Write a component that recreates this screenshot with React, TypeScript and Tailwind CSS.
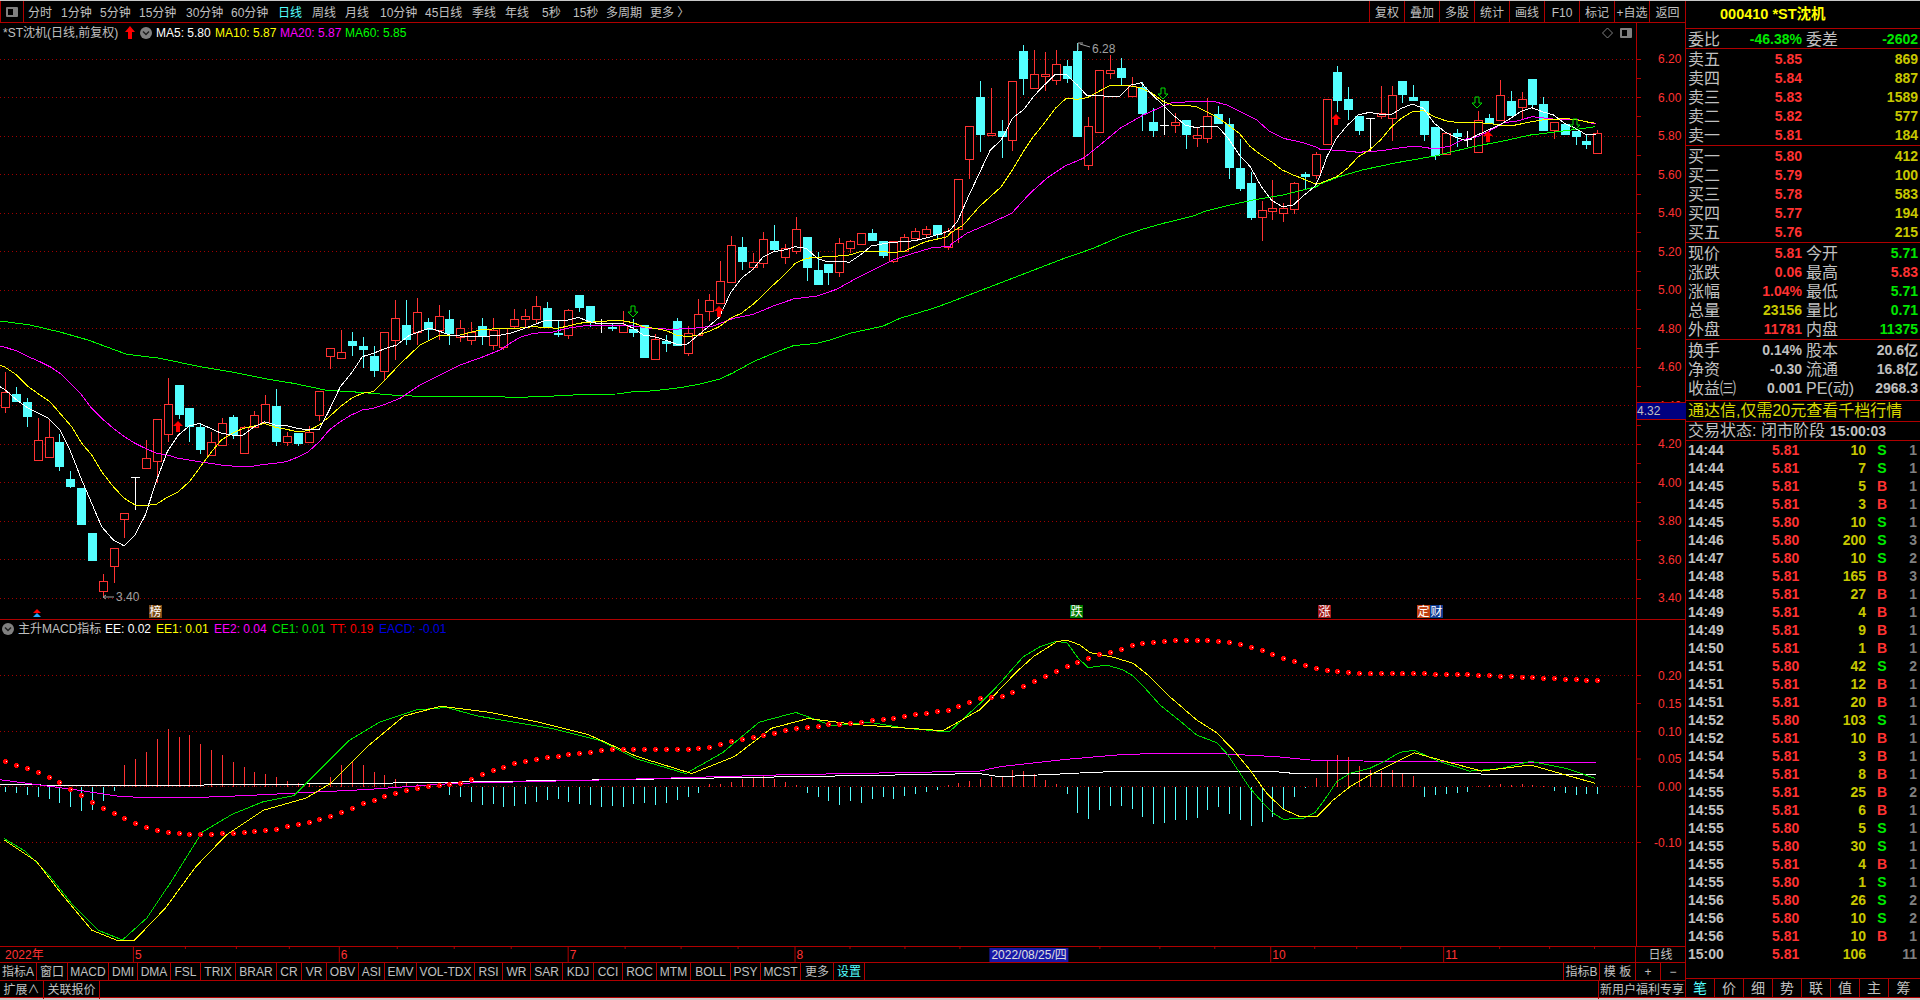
import React from 'react'

type Pt = [number, number]
type Candle = [string, number, number, number?, number?]

const RED = '#ff3232'
const CYAN = '#54ffff'
const GRID = '#a00000'

const candleX = (i: number) => Math.round(5.3 + 10.83 * i)

// zoomed coordinates -> page coordinates
const toPage = (ox: number, oy: number, sx: number, pts: number[][]): Pt[] =>
  pts.map(([x, y]) => [ox + x / sx, oy + y / 3] as Pt)
const fromSmall = (pts: number[][]): Pt[] => pts.map(([x, y]) => [x * 1.2245, y * 1.224] as Pt)
const ZOOM2 = 2.613
const scaleC = (oy: number, list: Candle[]): Candle[] =>
  list.map(([k, t, b, wt, wb]) => [k, oy + t / 3, oy + b / 3, oy + (wt ?? t) / 3, oy + (wb ?? b) / 3])

const candles: Candle[] = [
  ...scaleC(340, [
    ['r', 157, 200, 97, 220], ['c', 162, 186, 141], ['c', 186, 231, 174, 260], ['r', 301, 361, 234], ['r', 292, 350, 236],
    ['c', 306, 380, 282, 392], ['c', 418, 441, 393, 443], ['c', 444, 554], ['c', 579, 662], ['r', 724, 752, 702, 770],
    ['r', 625, 677, 625, 728], ['r', 520, 538, 520, 594], ['w', 412, 412, 412, 509], ['r', 355, 383, 300, 386], ['r', 238, 362, 238, 428],
    ['r', 193, 281, 114, 305], ['c', 135, 224, 135, 236], ['c', 205, 261, 205, 305], ['c', 261, 329, 252, 341], ['r', 307, 344, 276],
    ['r', 250, 314, 235], ['c', 231, 285, 225, 296], ['r', 262, 338, 258], ['r', 226, 262, 213], ['r', 193, 245, 165],
    ['c', 198, 305, 147, 318], ['r', 287, 307, 277, 318], ['c', 279, 311, 279, 318], ['r', 275, 307, 258], ['r', 153, 226, 153, 243],
    ['r', 25, 49, 25, 87], ['r', 37, 55, -30], ['c', 3, 17, -25, 47], ['c', 18, 29, -10, 85], ['c', 48, 93, 18, 110],
    ['r', -25, 94, -25, 120],
  ]),
  ['r', 318, 340, 300, 360], ['c', 325, 340, 300, 345], ['r', 312, 332, 298, 345], ['c', 322, 330, 318, 340], ['r', 316, 330, 305, 340],
  ['c', 319, 334, 310, 345], ['r', 328, 337, 320, 342], ['r', 332, 340, 322, 345], ['c', 326, 336, 318, 345], ['r', 330, 345, 318, 350],
  ...scaleC(200, [
    ['r', 385, 440, 385, 450], ['r', 358, 377, 327, 385], ['r', 349, 358, 327, 380], ['r', 319, 356, 289, 369], ['c', 324, 381, 306],
    ['c', 400, 404, 364, 410], ['r', 331, 406, 327, 417], ['c', 285, 323, 285, 336], ['c', 318, 368, 318, 381], ['w', 375, 375, 358, 399],
    ['c', 381, 387, 369, 393], ['r', 376, 395, 334], ['c', 387, 399, 358, 411], ['c', 375, 473], ['r', 418, 476, 403, 479],
    ['c', 423, 431, 405, 456], ['c', 363, 437, 354], ['r', 400, 458, 379, 468], ['r', 343, 406, 297], ['r', 301, 332, 282, 363],
    ['r', 244, 308, 183], ['r', 136, 245, 109, 248], ['c', 141, 186, 111, 210], ['r', 187, 200, 159, 210], ['r', 118, 188, 97, 204],
    ['c', 124, 150, 75, 155], ['r', 145, 170, 132, 192], ['r', 88, 152, 52, 161], ['c', 111, 203, 111, 243], ['c', 210, 255, 157],
    ['c', 192, 219, 192, 255], ['r', 130, 215, 114, 231], ['r', 124, 143, 120, 160], ['r', 100, 131], ['c', 99, 123, 87],
    ['c', 124, 168, 124, 174], ['r', 124, 182, 124, 188], ['r', 112, 153, 102], ['r', 94, 113, 84], ['r', 88, 101, 78, 115],
    ['c', 75, 105, 75, 118], ['r', 94, 140, 84, 150],
  ]),
  ...scaleC(30, [
    ['r', 448, 598, 448, 640], ['r', 289, 386, 289, 447], ['c', 201, 315, 153, 366], ['r', 310, 316, 174], ['c', 303, 320, 270, 384],
    ['r', 154, 329, 154, 363], ['c', 63, 147, 45, 195], ['r', 133, 173, 60], ['r', 133, 139, 66, 183], ['r', 103, 149, 60, 165],
    ['c', 108, 147, 90, 159], ['c', 63, 321, 40], ['r', 289, 404, 262, 420], ['r', 121, 305], ['r', 121, 129, 75, 147],
    ['c', 114, 144, 84, 168], ['r', 168, 198, 141, 200], ['c', 171, 252, 156, 303], ['c', 276, 303, 234, 321], ['w', 284, 284, 210, 315],
    ['r', 276, 284, 250, 309], ['c', 270, 315, 270, 357], ['r', 316, 323, 291, 351], ['r', 259, 323, 204, 339], ['c', 252, 282, 228],
    ['c', 282, 414, 264, 447], ['c', 414, 477, 327, 483], ['c', 459, 564, 426, 570], ['r', 541, 560, 513, 633], ['r', 534, 542, 450, 570],
    ['r', 534, 548, 519, 576], ['r', 459, 537, 456, 552], ['c', 432, 441, 426, 477], ['r', 372, 435, 366, 447], ['r', 207, 342],
  ]),
  ...scaleC(0, [
    ['c', 217, 303, 198, 335], ['c', 298, 330, 262, 360], ['c', 349, 393, 349, 405], ['w', 355, 355, 355, 455], ['r', 338, 349, 258, 358],
    ['r', 286, 355, 258, 422], ['c', 243, 285, 243, 310], ['c', 292, 303, 255], ['c', 303, 405, 303, 422], ['c', 381, 468, 381, 480],
    ['r', 400, 463], ['c', 400, 411, 388, 440], ['w', 418, 418, 393, 441], ['r', 361, 455, 333], ['c', 354, 371, 342],
    ['r', 286, 361, 240], ['c', 303, 349, 272], ['r', 298, 320, 275, 360], ['c', 237, 315, 237, 320], ['c', 312, 393, 292],
    ['r', 367, 389, 367, 416], ['c', 372, 405], ['c', 393, 411, 393, 434], ['c', 423, 434, 405, 446], ['r', 400, 458, 390],
  ]),
]

const ma5: Pt[] = [
  ...toPage(0, 340, 3, [[0, 140], [16, 150], [50, 180], [85, 205], [145, 235], [180, 270], [210, 330], [245, 420], [275, 490], [305, 560], [340, 600], [373, 618], [405, 585], [436, 525], [470, 420], [502, 335], [535, 285], [568, 258], [598, 250], [631, 265], [664, 280], [697, 285], [730, 285], [763, 260], [793, 245], [826, 255], [859, 257], [892, 265], [925, 270], [958, 268], [988, 210], [1021, 140], [1054, 100], [1087, 50], [1120, 40], [1150, 28], [1190, 15]]),
  [410, 335], [430, 328], [450, 335], [470, 337], [490, 336],
  ...toPage(500, 200, 3, [[0, 406], [30, 400], [60, 390], [100, 375], [139, 360], [172, 363], [205, 360], [235, 352], [268, 365], [301, 372], [334, 370], [367, 370], [400, 385], [430, 405], [463, 410], [496, 420], [529, 432], [562, 432], [595, 405], [625, 380], [658, 352], [691, 280], [724, 235], [757, 210], [790, 170], [820, 155], [853, 150], [886, 140], [919, 145], [952, 175], [982, 185], [1015, 183], [1048, 187], [1081, 165], [1114, 138], [1147, 132], [1177, 127], [1210, 125], [1243, 122], [1276, 115], [1309, 105], [1342, 95]]),
  ...toPage(950, 30, 3, [[0, 600], [22, 575], [55, 500], [88, 430], [121, 360], [154, 330], [187, 265], [220, 240], [250, 200], [283, 165], [316, 133], [349, 133], [382, 165], [412, 198], [445, 197], [478, 199], [511, 198], [544, 165], [574, 158], [607, 195], [640, 225], [673, 258], [706, 285], [739, 293], [769, 288], [802, 288], [835, 325], [868, 375], [901, 410], [934, 470], [964, 510], [997, 530], [1030, 525], [1063, 495], [1096, 468]]),
  ...toPage(1320, 0, ZOOM2, [[0, 528], [18, 470], [43, 415], [72, 375], [100, 345], [129, 337], [158, 343], [187, 343], [213, 325], [241, 312], [270, 325], [299, 370], [328, 397], [354, 412], [383, 422], [411, 405], [440, 390], [469, 375], [498, 355], [524, 335], [553, 323], [581, 335], [610, 345], [639, 370], [667, 385], [694, 403], [720, 403]]),
]

const ma10: Pt[] = [
  ...toPage(0, 340, 3, [[0, 75], [16, 82], [50, 105], [85, 140], [120, 165], [150, 185], [180, 220], [215, 260], [245, 310], [275, 345], [305, 395], [340, 440], [373, 475], [405, 495], [436, 497], [470, 492], [502, 472], [535, 455], [568, 425], [598, 385], [631, 340], [664, 300], [697, 280], [730, 265], [763, 258], [793, 250], [826, 262], [859, 268], [892, 275], [925, 272], [958, 255], [988, 230], [1021, 200], [1054, 175], [1087, 160], [1120, 155], [1150, 125], [1200, 72]]),
  [420, 345], [440, 335], [460, 335], [480, 330],
  ...toPage(500, 200, 3, [[0, 385], [50, 385], [100, 380], [172, 385], [205, 378], [235, 370], [268, 367], [334, 362], [367, 362], [400, 368], [430, 380], [463, 385], [500, 392], [529, 405], [562, 410], [595, 405], [625, 395], [658, 380], [691, 355], [724, 340], [757, 315], [790, 285], [820, 255], [853, 225], [886, 190], [919, 175], [952, 172], [982, 170], [1015, 168], [1048, 165], [1081, 155], [1114, 155], [1147, 155], [1177, 157], [1210, 155], [1243, 140], [1276, 125], [1309, 118], [1342, 110]]),
  ...toPage(950, 30, 3, [[0, 610], [40, 585], [88, 530], [154, 470], [187, 420], [220, 365], [250, 320], [283, 280], [316, 235], [349, 205], [382, 208], [412, 203], [445, 185], [478, 167], [511, 166], [544, 168], [574, 175], [607, 190], [640, 215], [673, 227], [706, 226], [739, 230], [769, 245], [802, 262], [835, 285], [868, 310], [901, 350], [934, 375], [964, 395], [997, 420], [1030, 435], [1063, 448], [1096, 462]]),
  ...toPage(1320, 0, ZOOM2, [[0, 550], [43, 530], [72, 505], [100, 470], [129, 450], [158, 420], [187, 380], [213, 355], [241, 335], [270, 332], [299, 350], [328, 362], [354, 367], [383, 367], [411, 368], [440, 370], [469, 375], [498, 378], [524, 372], [553, 365], [581, 360], [610, 358], [639, 356], [667, 358], [694, 365], [720, 370]]),
]

const ma20: Pt[] = [
  ...toPage(0, 340, 3, [[0, 18], [16, 22], [50, 33], [85, 50], [120, 65], [150, 80], [180, 100], [215, 135], [245, 165], [275, 205], [305, 235], [340, 265], [373, 290], [405, 310], [436, 325], [470, 340], [502, 345], [535, 355], [568, 360], [598, 365], [631, 370], [664, 375], [697, 378], [730, 381], [763, 378], [793, 373], [826, 370], [859, 365], [892, 352], [925, 335], [958, 305], [988, 270], [1021, 245], [1054, 225], [1087, 210], [1120, 205], [1150, 195], [1200, 175]]),
  [420, 385], [440, 375], [460, 365], [480, 358],
  ...toPage(500, 200, 3, [[0, 450], [30, 430], [60, 412], [100, 400], [160, 396], [200, 385], [250, 378], [300, 375], [370, 375], [400, 378], [450, 385], [520, 388], [580, 385], [640, 378], [700, 355], [760, 343], [820, 318], [880, 297], [950, 288], [1010, 268], [1060, 240], [1120, 210], [1180, 180], [1240, 160], [1300, 142], [1350, 140]]),
  ...toPage(950, 30, 3, [[0, 645], [50, 610], [120, 580], [185, 550], [240, 490], [290, 445], [345, 408], [400, 385], [450, 345], [510, 295], [580, 255], [640, 228], [670, 217], [790, 214], [830, 225], [880, 250], [920, 270], [960, 305], [1000, 325], [1060, 338], [1100, 352]]),
  ...toPage(1320, 0, ZOOM2, [[0, 448], [30, 450], [60, 452], [100, 457], [160, 452], [200, 445], [250, 438], [300, 447], [340, 438], [370, 420], [411, 410], [440, 395], [480, 368], [520, 362], [553, 350], [610, 357], [670, 358], [720, 372]]),
]

const ma60: Pt[] = [
  [0, 321], [30, 325], [60, 332], [88, 340],
  ...toPage(0, 340, 3, [[380, 43], [480, 55], [600, 80], [700, 97], [800, 117], [880, 130], [975, 150], [1080, 157], [1200, 167]]),
  [450, 397],
  ...toPage(500, 200, 3, [[0, 590], [50, 593], [100, 590], [190, 587], [250, 583], [350, 582], [400, 575], [450, 573], [500, 568], [540, 563], [600, 552], [660, 537], [700, 518], [760, 485], [820, 460], [880, 437], [950, 430], [990, 420], [1050, 400], [1150, 378], [1200, 355], [1300, 325], [1350, 307]]),
  ...toPage(950, 30, 3, [[335, 688], [430, 655], [510, 620], [570, 600], [640, 580], [730, 558], [770, 542], [850, 523], [910, 510], [1000, 495], [1100, 470]]),
  ...toPage(1320, 0, ZOOM2, [[0, 552], [50, 530], [110, 510], [200, 488], [300, 468], [400, 440], [470, 425], [550, 405], [620, 395], [670, 388], [720, 380]]),
]

// MACD pane
const macdGreen: Pt[] = [
  ...fromSmall([[3, 685], [20, 695], [40, 715], [60, 740], [80, 760], [100, 768], [120, 750], [140, 720], [165, 680], [190, 665], [215, 655], [240, 650], [265, 625], [285, 605], [310, 590], [340, 580], [365, 578], [390, 585], [420, 590], [450, 595], [490, 605], [520, 620], [560, 632], [590, 615], [620, 590], [650, 582], [680, 593], [710, 590], [740, 595], [775, 598], [800, 575]]),
  ...toPage(1000, 620, 3, [[0, 190], [30, 155], [70, 110], [120, 80], [165, 65], [200, 67], [235, 115], [265, 143], [320, 135], [370, 150], [400, 168], [440, 210], [480, 255], [530, 295], [590, 345], [650, 368], [680, 400], [720, 460], [750, 505], [790, 550], [820, 580], [850, 598], [910, 595], [945, 578], [980, 530], [1010, 485], [1050, 460], [1110, 445], [1160, 420], [1200, 397]]),
  ...fromSmall([[1155, 613], [1175, 622], [1200, 630], [1225, 628], [1250, 622], [1280, 628], [1303, 636]]),
]
const macdYellow: Pt[] = [
  ...fromSmall([[3, 686], [30, 704], [50, 730], [75, 760], [95, 768], [110, 768], [135, 742], [160, 708], [185, 682], [215, 662], [250, 652], [270, 640], [300, 610], [330, 585], [360, 577], [400, 582], [440, 590], [480, 600], [520, 618], [565, 632], [600, 618], [630, 595], [660, 587], [700, 592], [770, 597], [800, 580]]),
  ...toPage(1000, 620, 3, [[0, 208], [50, 155], [100, 110], [170, 65], [200, 60], [240, 75], [270, 98], [340, 112], [400, 130], [450, 170], [500, 222], [590, 300], [650, 338], [700, 390], [750, 450], [800, 520], [850, 568], [900, 590], [950, 590], [1000, 540], [1050, 500], [1110, 465], [1200, 420]]),
  ...fromSmall([[1155, 615], [1180, 622], [1210, 630], [1250, 625], [1303, 640]]),
]
const macdMagenta: Pt[] = [
  ...fromSmall([[0, 637], [60, 645], [100, 651], [150, 652], [200, 650], [300, 645], [370, 640], [500, 637], [640, 633], [800, 630]]),
  ...toPage(1000, 620, 3, [[0, 440], [200, 418], [350, 405], [470, 400], [640, 400], [830, 410], [930, 420], [1200, 425]]),
  [1596, 763],
]
const macdWhite: Pt[] = [
  ...fromSmall([[0, 641], [100, 642], [300, 640], [500, 637], [800, 632]]),
  ...toPage(1000, 620, 3, [[0, 470], [180, 462], [280, 457], [380, 454], [770, 454], [865, 457], [870, 460], [1200, 460]]),
  [1596, 775],
]
const dotPath: Pt[] = [
  ...fromSmall([[5, 622], [20, 627], [35, 632], [50, 640], [75, 655], [100, 668], [125, 678], [150, 681], [175, 681], [200, 680], [225, 677], [250, 672], [275, 665], [300, 655], [325, 647], [350, 642], [375, 640], [400, 630], [425, 622], [450, 618], [475, 615], [500, 612], [525, 612], [560, 612], [580, 610], [600, 605], [625, 600], [650, 595], [675, 592], [700, 590], [725, 587], [750, 583], [775, 580], [800, 570]]),
  ...toPage(1000, 620, 3, [[5, 228], [35, 215], [66, 200], [99, 185], [132, 170], [165, 155], [198, 140], [231, 125], [261, 116], [294, 104], [327, 96], [360, 87], [393, 77], [423, 68], [456, 65], [489, 63], [522, 61], [555, 61], [588, 61], [618, 61], [651, 63], [684, 66], [717, 72], [750, 81], [783, 89], [813, 101], [846, 113], [879, 122], [912, 134], [945, 143], [978, 150], [1008, 152], [1041, 155], [1074, 158], [1107, 158], [1140, 158], [1173, 158]]),
  ...fromSmall([[1200, 551], [1250, 553], [1305, 556]]),
]

const lerpY = (pts: Pt[], x: number) => {
  for (let i = 1; i < pts.length; i++) {
    if (x <= pts[i][0]) {
      const [x0, y0] = pts[i - 1]
      const [x1, y1] = pts[i]
      return y0 + ((y1 - y0) * (x - x0)) / (x1 - x0 || 1)
    }
  }
  return pts[pts.length - 1][1]
}

const histogram = [
  -5, -6, -8, -10, -12, -16, -20, -24, -23, -14, -4, 22, 28, 35, 48, 58, 50, 52, 43, 37, 32, 25, 20, 15, 13, 10, 6, 4, 3, 1,
  10, 22, 25, 22, 15, 12, 8, 5, 3, 2, 1, -8, -10, -15, -18, -17, -20, -19, -17, -15, -13, -12, -15, -17, -18, -20, -19, -20, -17, -16,
  -18, -16, -13, -10, -6, 3, 3, 5, 8, 10, 12, 8, 5, 2, -6, -10, -14, -18, -14, -16, -12, -10, -12, -9, -7, -5, -3, 2, 4, 6, 8, 10,
  11, 17, 16, 13, 7, 3, -7, -26, -32, -23, -19, -19, -22, -30, -37, -36, -33, -33, -31, -23, -20, -27, -33, -39, -35, -30, -23, -10, -1,
  9, 27, 32, 30, 21, 17, 16, 17, 14, 11, -10, -8, -7, -6, -5, 1, 2, 3, 2, 3, 2, 1, -4, -6, -8, -7, -7,
]

const prices = [6.2, 6.0, 5.8, 5.6, 5.4, 5.2, 5.0, 4.8, 4.6, 4.4, 4.2, 4.0, 3.8, 3.6, 3.4]
const priceY = (p: number) => 58.7 + (6.2 - p) * 192.6

const line = (pts: Pt[]) => pts.map(([x, y]) => `${x.toFixed(1)},${y.toFixed(1)}`).join(' ')

function UpArrow({ x, y }: { x: number; y: number }) {
  return (
    <polygon
      fill="#ff0000"
      points={`${x},${y} ${x + 5},${y + 5} ${x + 2},${y + 5} ${x + 2},${y + 11} ${x - 2},${y + 11} ${x - 2},${y + 5} ${x - 5},${y + 5}`}
    />
  )
}

function DownArrow({ x, y }: { x: number; y: number }) {
  return (
    <polygon
      fill="none"
      stroke="#00e000"
      points={`${x - 2},${y} ${x + 2},${y} ${x + 2},${y + 6} ${x + 5},${y + 6} ${x},${y + 11} ${x - 5},${y + 6} ${x - 2},${y + 6}`}
    />
  )
}

function Tag({ x, text, bg }: { x: number; text: string; bg: string }) {
  return (
    <g>
      <rect x={x} y={605} width={13} height={13} fill={bg} />
      <text x={x + 0.5} y={616} className="text-[12px] fill-white">
        {text}
      </text>
    </g>
  )
}

function PriceChart() {
  return (
    <svg viewBox="0 23 1686 596" className="block w-[1686px] h-[596px]">
      {prices.map((p) => (
        <line key={p} x1={0} x2={1636} y1={Math.round(priceY(p)) + 0.5} y2={Math.round(priceY(p)) + 0.5} stroke={GRID} strokeDasharray="1 3" />
      ))}
      <g shapeRendering="crispEdges">
        {candles.map(([k, t, b, wt, wb], i) => {
          const x = candleX(i)
          const top = Math.round(t)
          const bot = Math.round(b)
          const color = k === 'r' ? RED : k === 'c' ? CYAN : '#ffffff'
          return (
            <g key={i}>
              <line x1={x + 0.5} x2={x + 0.5} y1={Math.round(wt ?? t)} y2={top} stroke={color} />
              <line x1={x + 0.5} x2={x + 0.5} y1={bot} y2={Math.round(wb ?? b)} stroke={color} />
              {k === 'r' && <rect x={x - 4 + 0.5} y={top + 0.5} width={8} height={bot - top} fill="#000" stroke={RED} />}
              {k === 'c' && <rect x={x - 4} y={top} width={9} height={bot - top} fill={CYAN} />}
              {k === 'w' && <line x1={x - 4} x2={x + 5} y1={top + 0.5} y2={top + 0.5} stroke="#fff" />}
            </g>
          )
        })}
        <polyline points={line(ma60)} fill="none" stroke="#00ff00" />
        <polyline points={line(ma20)} fill="none" stroke="#ff00ff" />
        <polyline points={line(ma10)} fill="none" stroke="#ffff00" />
        <polyline points={line(ma5)} fill="none" stroke="#ffffff" />
      </g>
      <UpArrow x={178} y={421} />
      <UpArrow x={719} y={306} />
      <UpArrow x={1336} y={114} />
      <UpArrow x={1488} y={131} />
      <DownArrow x={633} y={306} />
      <DownArrow x={1163} y={88} />
      <DownArrow x={1477} y={97} />
      <DownArrow x={1575} y={119} />

      {/* high / low notes */}
      <path d="M103 597 L114 597 M103 597 L106 595 M103 597 L106 599" stroke="#a0a0a0" fill="none" />
      <text x={116} y={601} className="text-[12px] fill-[#a0a0a0]">3.40</text>
      <path d="M1078 43 L1078 50 M1078 43 L1083 43 M1080 44 L1090 47" stroke="#a0a0a0" fill="none" />
      <text x={1092} y={53} className="text-[12px] fill-[#a0a0a0]">6.28</text>

      {/* signals along the bottom */}
      <polygon points="37,609 41,613 33,613" fill="#ff0000" />
      <polygon points="37,613 41,617 33,617" fill="#22aaff" />
      <Tag x={149} text="榜" bg="#7a4a14" />
      <Tag x={1070} text="跌" bg="#007a00" />
      <Tag x={1318} text="涨" bg="#a01818" />
      <Tag x={1417} text="定" bg="#c04010" />
      <Tag x={1430} text="财" bg="#103a90" />

      {/* price axis */}
      <line x1={1636.5} x2={1636.5} y1={23} y2={619} stroke="#b00000" />
      {Array.from({ length: 29 }, (_, i) => (
        <line key={i} x1={1636} x2={1641} y1={Math.round(priceY(6.2 - i * 0.1)) + 0.5} y2={Math.round(priceY(6.2 - i * 0.1)) + 0.5} stroke="#b00000" />
      ))}
      {prices.map((p) => (
        <text key={p} x={1658} y={priceY(p) + 4.5} className="text-[12px] fill-[#ff3232]">
          {p.toFixed(2)}
        </text>
      ))}
      <rect x={1637} y={403} width={49} height={16} fill="#000080" />
      <line x1={1636} x2={1686} y1={402.5} y2={402.5} stroke="#b00000" />
      <line x1={1636} x2={1686} y1={419.5} y2={419.5} stroke="#b00000" />
      <text x={1637} y={415} className="text-[12px] fill-[#c0c0c0]">4.32</text>

      {/* corner buttons */}
      <path d="M1607.5 28 L1612.5 33 L1607.5 38 L1602.5 33 Z" fill="none" stroke="#808080" />
      <rect x={1620} y={28} width={12} height={10} rx={1} fill="#808080" />
      <rect x={1622} y={30} width={5} height={6} fill="#000" />
    </svg>
  )
}

function MacdChart() {
  return (
    <svg viewBox="0 620 1686 326" className="block w-[1686px] h-[326px]">
      {[675.5, 731.5, 786.5, 842.5].map((y) => (
        <line key={y} x1={0} x2={1636} y1={y} y2={y} stroke={GRID} strokeDasharray="1 3" />
      ))}
      <g shapeRendering="crispEdges">
        {histogram.map((h, i) => (
          <line key={i} x1={candleX(i) + 0.5} x2={candleX(i) + 0.5} y1={787} y2={787 - h} stroke={h > 0 ? RED : CYAN} />
        ))}
        <polyline points={line(macdWhite)} fill="none" stroke="#ffffff" />
        <polyline points={line(macdMagenta)} fill="none" stroke="#ff00ff" />
        <polyline points={line(macdGreen)} fill="none" stroke="#00e000" />
        <polyline points={line(macdYellow)} fill="none" stroke="#ffff00" />
      </g>
      {histogram.map((_, i) => {
        const x = candleX(i)
        const y = Math.round(lerpY(dotPath, x))
        return (
          <g key={i} shapeRendering="crispEdges">
            <rect x={x - 1} y={y - 2} width={3} height={5} fill="#ff0000" />
            <rect x={x - 2} y={y - 1} width={5} height={3} fill="#ff0000" />
            <rect x={x + 1} y={y} width={1} height={1} fill="#ffffff" />
          </g>
        )
      })}
      <line x1={1636.5} x2={1636.5} y1={620} y2={946} stroke="#c00000" strokeWidth={1} />
      {[
        ['0.20', 675.5],
        ['0.15', 703.5],
        ['0.10', 731.5],
        ['0.05', 759],
        ['0.00', 786.5],
        ['-0.10', 842.5],
      ].map(([t, y]) => (
        <g key={t as string}>
          <line x1={1636} x2={1641} y1={y as number} y2={y as number} stroke="#b00000" />
          <text x={t === '-0.10' ? 1654 : 1658} y={(y as number) + 4} className="text-[12px] fill-[#ff3232]">
            {t}
          </text>
        </g>
      ))}
    </svg>
  )
}

function DateAxis() {
  const months: [number, string][] = [[133, '5'], [339, '6'], [568, '7'], [795, '8'], [1271, '10'], [1444, '11']]
  const small = [185, 236, 289, 397, 454, 511, 625, 681, 738, 850, 905, 960, 1100, 1160, 1215, 1315, 1357, 1401, 1500, 1550, 1595]
  return (
    <svg viewBox="0 0 1636 15" className="block w-[1636px] h-[15px]">
      {small.map((x) => (
        <line key={x} x1={x + 0.5} x2={x + 0.5} y1={0} y2={2} stroke="#b00000" />
      ))}
      <text x={5} y={12.5} className="text-[12px] fill-[#ff3232]">2022年</text>
      {months.map(([x, t]) => (
        <g key={x}>
          <line x1={x + 0.5} x2={x + 0.5} y1={0} y2={15} stroke="#b00000" />
          <text x={x + 2} y={12.5} className="text-[12px] fill-[#ff3232]">{t}</text>
        </g>
      ))}
      <rect x={990} y={1} width={79} height={14} fill="#1818a8" />
      <text x={992} y={12.5} className="text-[12px] fill-[#e0e0e0]">2022/08/25/四</text>
    </svg>
  )
}

const periods = [
  ['分时', 'w-[33px]'], ['1分钟', 'w-[39px]'], ['5分钟', 'w-[39px]'], ['15分钟', 'w-[47px]'], ['30分钟', 'w-[45px]'], ['60分钟', 'w-[47px]'],
  ['日线', 'w-[34px] text-[#54ffff]'], ['周线', 'w-[33px]'], ['月线', 'w-[35px]'], ['10分钟', 'w-[45px]'], ['45日线', 'w-[47px]'], ['季线', 'w-[33px]'],
  ['年线', 'w-[37px]'], ['5秒', 'w-[31px]'], ['15秒', 'w-[33px]'], ['多周期', 'w-[44px]'], ['更多 〉', 'w-[40px]'],
]
const tools = ['复权', '叠加', '多股', '统计', '画线', 'F10', '标记', '+自选']

const indicators = [
  ['指标A', 'w-[37px]'], ['窗口', 'w-[31px]'], ['MACD', 'w-[41px]'], ['DMI', 'w-[29px]'], ['DMA', 'w-[33px]'], ['FSL', 'w-[30px]'],
  ['TRIX', 'w-[35px]'], ['BRAR', 'w-[41px]'], ['CR', 'w-[25px]'], ['VR', 'w-[25px]'], ['OBV', 'w-[32px]'], ['ASI', 'w-[26px]'],
  ['EMV', 'w-[32px]'], ['VOL-TDX', 'w-[58px]'], ['RSI', 'w-[28px]'], ['WR', 'w-[28px]'], ['SAR', 'w-[32px]'], ['KDJ', 'w-[31px]'],
  ['CCI', 'w-[29px]'], ['ROC', 'w-[34px]'], ['MTM', 'w-[34px]'], ['BOLL', 'w-[40px]'], ['PSY', 'w-[30px]'], ['MCST', 'w-[40px]'],
  ['更多', 'w-[33px]'], ['设置', 'w-[31px] text-[#54ffff]'],
]

const sell = [['卖五', '5.85', '869'], ['卖四', '5.84', '887'], ['卖三', '5.83', '1589'], ['卖二', '5.82', '577'], ['卖一', '5.81', '184']]
const buy = [['买一', '5.80', '412'], ['买二', '5.79', '100'], ['买三', '5.78', '583'], ['买四', '5.77', '194'], ['买五', '5.76', '215']]

const R = 'text-[#ff3232]'
const G = 'text-[#00e800]'
const Y = 'text-[#c8c800]'
const W = 'text-[#c0c0c0]'
const stats = [
  ['现价', '5.81', R, '今开', '5.71', G],
  ['涨跌', '0.06', R, '最高', '5.83', R],
  ['涨幅', '1.04%', R, '最低', '5.71', G],
  ['总量', '23156', Y, '量比', '0.71', G],
  ['外盘', '11781', R, '内盘', '11375', G],
]
const finance = [
  ['换手', '0.14%', W, '股本', '20.6亿', W],
  ['净资', '-0.30', W, '流通', '16.8亿', W],
  ['收益㈢', '0.001', W, 'PE(动)', '2968.3', W],
]

const ticks: [string, string, string, string, string][] = [
  ['14:44', '5.81', '10', 'S', '1'], ['14:44', '5.81', '7', 'S', '1'], ['14:45', '5.81', '5', 'B', '1'], ['14:45', '5.81', '3', 'B', '1'],
  ['14:45', '5.80', '10', 'S', '1'], ['14:46', '5.80', '200', 'S', '3'], ['14:47', '5.80', '10', 'S', '2'], ['14:48', '5.81', '165', 'B', '3'],
  ['14:48', '5.81', '27', 'B', '1'], ['14:49', '5.81', '4', 'B', '1'], ['14:49', '5.81', '9', 'B', '1'], ['14:50', '5.81', '1', 'B', '1'],
  ['14:51', '5.80', '42', 'S', '2'], ['14:51', '5.81', '12', 'B', '1'], ['14:51', '5.81', '20', 'B', '1'], ['14:52', '5.80', '103', 'S', '1'],
  ['14:52', '5.81', '10', 'B', '1'], ['14:54', '5.81', '3', 'B', '1'], ['14:54', '5.81', '8', 'B', '1'], ['14:55', '5.81', '25', 'B', '2'],
  ['14:55', '5.81', '6', 'B', '1'], ['14:55', '5.80', '5', 'S', '1'], ['14:55', '5.80', '30', 'S', '1'], ['14:55', '5.81', '4', 'B', '1'],
  ['14:55', '5.80', '1', 'S', '1'], ['14:56', '5.80', '26', 'S', '2'], ['14:56', '5.80', '10', 'S', '2'], ['14:56', '5.81', '10', 'B', '1'],
  ['15:00', '5.81', '106', '', '11'],
]

function Book({ rows }: { rows: string[][] }) {
  return (
    <div className="h-[97px] border-b border-[#b00000]">
      {rows.map(([name, price, vol]) => (
        <div key={name} className="grid grid-cols-[114px_112px] gap-x-[4px] h-[19px] items-center pl-[2px]">
          <div className="flex justify-between items-center">
            <span className="text-[16px] leading-[19px] text-[#c0c0c0]">{name}</span>
            <span className="text-[14px] font-bold text-[#ff3232]">{price}</span>
          </div>
          <span className="text-[14px] font-bold text-right text-[#c8c800]">{vol}</span>
        </div>
      ))}
    </div>
  )
}

function Stats({ rows, height }: { rows: string[][]; height: string }) {
  return (
    <div className={`border-b border-[#b00000] ${height}`}>
      {rows.map(([a, av, ac, b, bv, bc]) => (
        <div key={a} className="grid grid-cols-[114px_112px] gap-x-[4px] h-[19px] items-center pl-[2px]">
          <div className="flex justify-between items-center">
            <span className="text-[16px] leading-[19px] text-[#c0c0c0]">{a}</span>
            <span className={`text-[14px] font-bold ${ac}`}>{av}</span>
          </div>
          <div className="flex justify-between items-center">
            <span className="text-[16px] leading-[19px] text-[#c0c0c0]">{b}</span>
            <span className={`text-[14px] font-bold ${bc}`}>{bv}</span>
          </div>
        </div>
      ))}
    </div>
  )
}

function Chevron() {
  return (
    <svg viewBox="0 0 12 12" className="w-[12px] h-[12px]">
      <circle cx="6" cy="6" r="6" fill="#808080" />
      <path d="M3 4.5 L6 7.5 L9 4.5" fill="none" stroke="#202020" strokeWidth="1.5" />
    </svg>
  )
}

export default function App() {
  return (
    <div className="w-[1920px] h-[1000px] overflow-hidden bg-black text-[12px] text-[#c0c0c0] [font-family:'Liberation_Sans','Noto_Sans_CJK_SC',sans-serif]">
      <div className="h-px bg-[#c8c8c8]" />
      <div className="flex h-[997px] border-b border-[#b00000]">
        {/* left: chart column */}
        <div className="w-[1686px] flex flex-col border-r border-[#b00000]">
          <div className="relative h-[22px] pt-[2px] pl-[28px] flex items-center border-b border-[#b00000] whitespace-nowrap">
            <div className="absolute left-0 top-0 h-[21px] w-[24px] flex items-center justify-center border-x border-[#b00000]">
              <svg viewBox="0 0 12 10" className="w-[12px] h-[10px]">
                <rect width="12" height="10" rx="1" fill="#808080" />
                <rect x="2" y="2" width="5" height="6" fill="#000" />
              </svg>
            </div>
            {periods.map(([t, c]) => (
              <span key={t} className={c}>{t}</span>
            ))}
            <div className="ml-auto -mt-[2px] flex h-[21px]">
              {tools.map((t) => (
                <span key={t} className="w-[35px] pt-[2px] flex items-center justify-center border-l border-[#b00000]">{t}</span>
              ))}
              <span className="w-[36px] pt-[2px] flex items-center justify-center border-l border-[#b00000]">返回</span>
            </div>
          </div>

          <div className="relative h-[597px] border-b border-[#b00000]">
            <PriceChart />
            <div className="absolute left-[3px] top-[2px] flex items-center h-[15px] whitespace-nowrap">
              <span className="w-[122px] text-[#c0c0c0]">*ST沈机(日线,前复权)</span>
              <svg viewBox="0 0 10 13" className="w-[10px] h-[13px]">
                <polygon points="5,0 10,6 7,6 7,13 3,13 3,6 0,6" fill="#ff0000" />
              </svg>
              <span className="ml-[5px] mr-[4px]"><Chevron /></span>
              <span className="w-[59px] text-white">MA5: 5.80</span>
              <span className="w-[65px] text-[#ffff00]">MA10: 5.87</span>
              <span className="w-[65px] text-[#ff00ff]">MA20: 5.87</span>
              <span className="text-[#00ff00]">MA60: 5.85</span>
            </div>
          </div>

          <div className="relative h-[326px]">
            <MacdChart />
            <div className="absolute left-[2px] top-[1px] flex items-center h-[15px] whitespace-nowrap">
              <Chevron />
              <span className="ml-[4px] w-[87px] text-[#c0c0c0]">主升MACD指标</span>
              <span className="w-[51px] text-white">EE: 0.02</span>
              <span className="w-[58px] text-[#ffff00]">EE1: 0.01</span>
              <span className="w-[58px] text-[#ff00ff]">EE2: 0.04</span>
              <span className="w-[58px] text-[#00e000]">CE1: 0.01</span>
              <span className="w-[49px] text-[#ff0000]">TT: 0.19</span>
              <span className="text-[#0000e0]">EACD: -0.01</span>
            </div>
          </div>

          <div className="flex h-[16px] border-t border-[#b00000]">
            <DateAxis />
            <span className="w-[50px] flex items-center justify-center border-l border-[#b00000]">日线</span>
          </div>

          <div className="flex h-[17px] border-y border-[#b00000] box-content whitespace-nowrap">
            {indicators.map(([t, w]) => (
              <span key={t} className={`${w} flex items-center justify-center border-r border-[#b00000] box-border`}>{t}</span>
            ))}
            <div className="ml-auto flex">
              <span className="w-[37px] flex items-center justify-center border-x border-[#b00000]">指标B</span>
              <span className="w-[36px] flex items-center justify-center border-r border-[#b00000]">模 板</span>
              <span className="w-[25px] flex items-center justify-center border-r border-[#b00000]">+</span>
              <span className="w-[24px] flex items-center justify-center">−</span>
            </div>
          </div>

          <div className="flex flex-1 whitespace-nowrap">
            <span className="w-[44px] flex items-center justify-center border-r border-[#b00000]">扩展∧</span>
            <span className="w-[56px] flex items-center justify-center border-r border-[#b00000]">关联报价</span>
            <span className="ml-auto w-[87px] flex items-center justify-center border-l border-[#b00000]">新用户福利专享</span>
          </div>
        </div>

        {/* right: quote column */}
        <div className="w-[234px] flex flex-col">
          <div className="h-[28px] border-b border-[#b00000] pl-[34px] pt-px flex items-center text-[14.5px] font-bold text-[#ffff00] whitespace-nowrap">
            000410 *ST沈机
          </div>
          <div className="h-[20px] border-b border-[#b00000] grid grid-cols-[114px_112px] gap-x-[4px] items-center pl-[2px]">
            <div className="flex justify-between items-center">
              <span className="text-[16px] leading-[19px]">委比</span>
              <span className="text-[14px] font-bold text-[#00e800]">-46.38%</span>
            </div>
            <div className="flex justify-between items-center">
              <span className="text-[16px] leading-[19px]">委差</span>
              <span className="text-[14px] font-bold text-[#00e800]">-2602</span>
            </div>
          </div>
          <Book rows={sell} />
          <Book rows={buy} />
          <Stats rows={stats} height="h-[97px]" />
          <Stats rows={finance} height="h-[61px]" />
          <div className="h-[21px] border-b border-[#b00000] pl-[2px] flex items-center text-[16px] text-[#d8d800] whitespace-nowrap">
            通达信,仅需20元查看千档行情
          </div>
          <div className="h-[19px] border-b border-[#b00000] pl-[2px] flex items-center gap-[5px] whitespace-nowrap">
            <span className="text-[16px]">交易状态: 闭市阶段</span>
            <span className="text-[14px] font-bold">15:00:03</span>
          </div>
          <div className="flex-1">
            {ticks.map(([time, price, vol, side, n], i) => (
              <div key={i} className="flex items-center h-[18px] text-[14px] font-bold whitespace-nowrap">
                <span className="w-[86px] pl-[2px] text-[#c0c0c0]">{time}</span>
                <span className="w-[40px] text-[#ff3232]">{price}</span>
                <span className="w-[54px] text-right text-[#c8c800]">{vol}</span>
                <span className={`w-[32px] text-center ${side === 'B' ? 'text-[#ff3232]' : 'text-[#00e800]'}`}>{side}</span>
                <span className="w-[19px] text-right text-[#808080]">{n}</span>
              </div>
            ))}
          </div>
          <div className="h-[18px] flex border-t border-[#b00000] box-content">
            {['笔', '价', '细', '势', '联', '值', '主', '筹'].map((t, i) => (
              <span
                key={t}
                className={`w-[29px] flex items-center justify-center text-[14px] border-r border-[#b00000] last:border-r-0 box-border ${i === 0 ? 'text-[#54ffff]' : ''}`}
              >
                {t}
              </span>
            ))}
          </div>
        </div>
      </div>
      <div className="h-[2px] bg-[#d0c8c8]" />
    </div>
  )
}
